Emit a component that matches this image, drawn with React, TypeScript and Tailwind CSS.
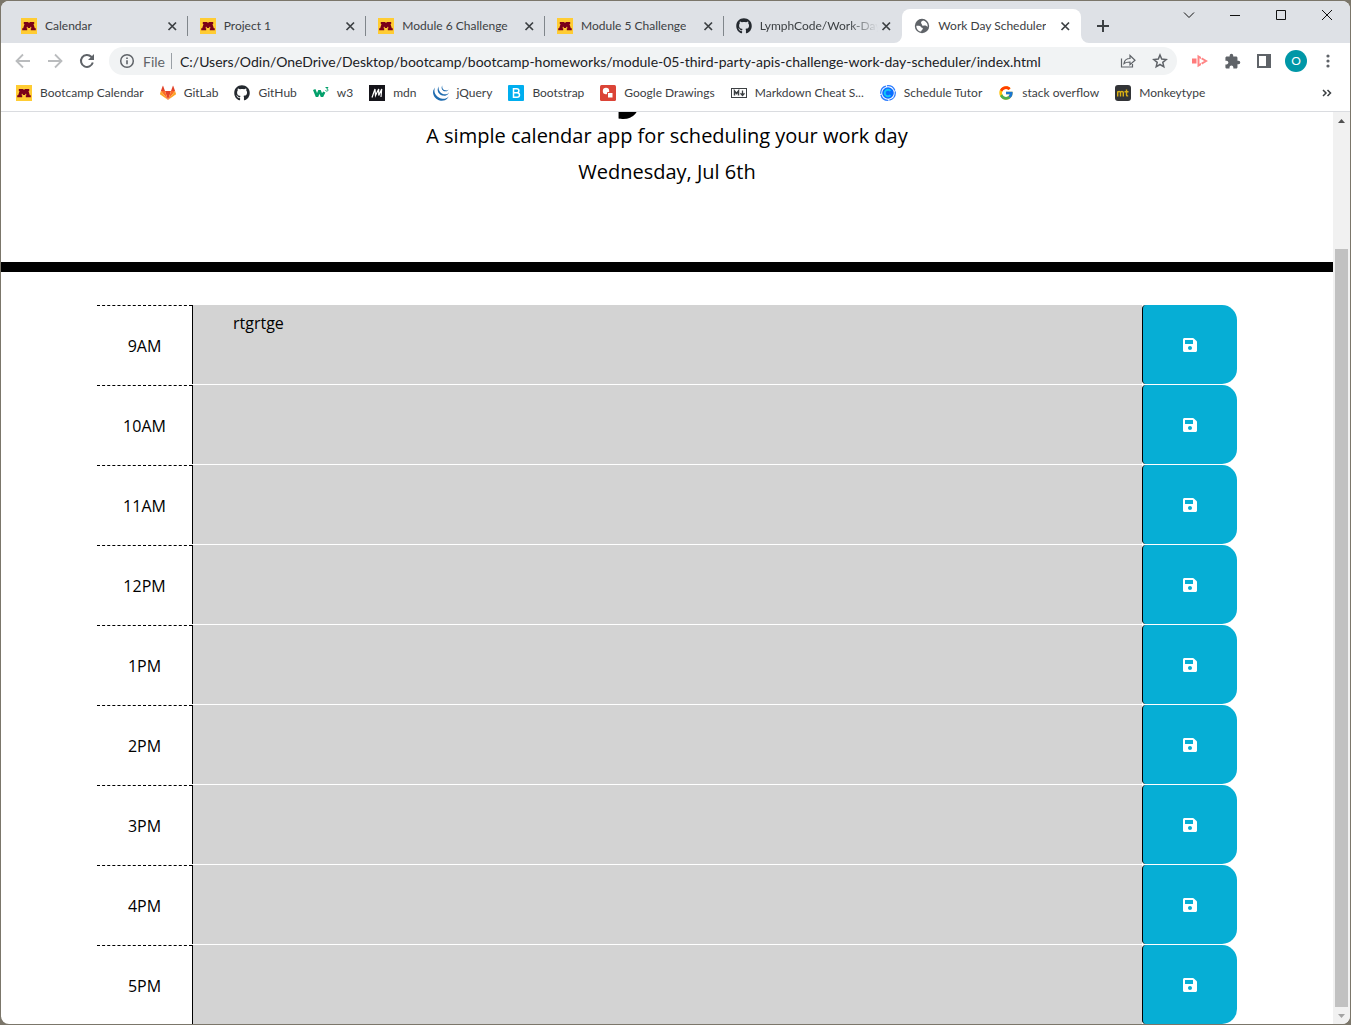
import type { ReactNode } from "react";
import { FaGithub, FaSave } from "react-icons/fa";
import { FcGoogle } from "react-icons/fc";
import { MdExtension } from "react-icons/md";
import { SiJquery } from "react-icons/si";

function MinnesotaIcon() {
  return (
    <svg viewBox="0 0 16 16" className="size-4 shrink-0" aria-hidden="true">
      <rect width="16" height="16" fill="#ffcc33" />
      <path
        d="M2.800 4h4.400L8 5.200 8.800 4h4.400v2h-.7l1.300 4.200h1v2H9.800v-2h.7L10 8.500 8.800 10H7.200L6 8.500l-.5 1.700h.7v2H1.200v-2h1L3.500 6h-.7z"
        fill="#7a0019"
      />
    </svg>
  );
}

function GitLabIcon() {
  return (
    <svg viewBox="0 0 16 16" className="size-4 shrink-0" aria-hidden="true">
      <path d="M8 15 5 6h6z" fill="#e24329" />
      <path d="M8 15 .9 6H5zM8 15l7.100-9H11z" fill="#fc6d26" />
      <path d="M.9 6 0 8.700c-.1.3 0 .6.3.8L8 15zM15.100 6l.9 2.700c.1.3 0 .6-.3.8L8 15z" fill="#fca326" />
      <path d="M.9 6 2.700 1c.1-.2.4-.2.5 0L5 6zM15.100 6 13.300 1c-.1-.2-.4-.2-.5 0L11 6z" fill="#e24329" />
    </svg>
  );
}

function W3Icon() {
  return (
    <svg viewBox="0 0 16 16" className="size-4 shrink-0" fill="none" stroke="#04a06b" aria-hidden="true">
      <path d="M1.200 4.500 4 11.500l2.500-6 2.500 6 2.200-4.500" strokeWidth="2.600" strokeLinejoin="bevel" />
      <path d="M12.500 2.500h2.500l-1.300 1.500c2 0 1.600 2.300-.1 2.100-.6 0-1-.3-1.200-.7" strokeWidth="1" />
    </svg>
  );
}

function MdnIcon() {
  return (
    <svg viewBox="0 0 16 16" className="size-4 shrink-0" aria-hidden="true">
      <rect width="16" height="16" fill="#15141a" />
      <path d="M3 12.500 6 4l.5 6.500L9.700 4v6.500L12.700 4l-.7 8" fill="none" stroke="#fff" strokeWidth="1.200" />
    </svg>
  );
}

function BootstrapIcon() {
  return (
    <svg viewBox="0 0 16 16" className="size-4 shrink-0" aria-hidden="true">
      <rect width="16" height="16" rx="1" fill="#00aeef" />
      <path
        d="M5.500 3.800h3.200c2.900 0 2.900 3.900 0 3.900H5.500h3.600c3.200 0 3.200 4.500 0 4.500H5.500z"
        fill="none"
        stroke="#fff"
        strokeWidth="1.500"
      />
    </svg>
  );
}

function DrawingsIcon() {
  return (
    <svg viewBox="0 0 16 16" className="size-4 shrink-0" aria-hidden="true">
      <rect width="16" height="16" rx="1.500" fill="#db4437" />
      <circle cx="6" cy="6" r="3.200" fill="#fff" />
      <path d="M7.500 7.500H13V13H7.500z" fill="#fff" stroke="#db4437" strokeWidth="1" />
    </svg>
  );
}

function MarkdownIcon() {
  return (
    <svg viewBox="0 0 16 16" className="size-4 shrink-0" fill="none" stroke="#3c4043" aria-hidden="true">
      <rect x=".5" y="3.500" width="15" height="9" />
      <path d="M3.500 10.500V6l2 2.500 2-2.500v4.500" strokeWidth="1.500" />
      <path d="M11.500 5.500V10M9.500 8.300l2 2.200 2-2.200" strokeWidth="1.300" />
    </svg>
  );
}

function CalendlyIcon() {
  return (
    <svg viewBox="0 0 16 16" className="size-4 shrink-0" fill="none" aria-hidden="true">
      <circle cx="8" cy="8" r="7.300" stroke="#2b7cff" strokeWidth="1.300" strokeDasharray="10 1" />
      <circle cx="8" cy="8" r="5.800" fill="#0a6cff" />
      <path d="M10.500 5.800a3.300 3.300 0 1 0 0 4.400" stroke="#12c5f5" strokeWidth="2" />
    </svg>
  );
}

function MonkeytypeIcon() {
  return (
    <svg viewBox="0 0 16 16" className="size-4 shrink-0" fill="none" stroke="#d9b014" strokeWidth="1.400" aria-hidden="true">
      <rect width="16" height="16" rx="3" fill="#323437" stroke="none" />
      <path d="M2.700 11.500V6.200M2.700 7.500c0-1.300 2.800-1.300 2.800 0v4M5.500 7.500c0-1.300 2.800-1.300 2.800 0v4M11.500 4.500v5.500c0 .8.500 1 1.700.9M9.500 6.700h4" />
    </svg>
  );
}

function GlobeIcon() {
  return (
    <svg viewBox="0 0 16 16" className="size-4 shrink-0" aria-hidden="true">
      <circle cx="8" cy="8" r="7.200" fill="#5f6368" />
      <path d="M9 2.500c-.8.8-2 .8-2 2.200 0 1 .9 1.200 1 2 .1.900 1 1.200 2 .9l1.500-.2c1 .1 1 1 2.200 1.300.2-3-1.700-5.600-4.700-6.200z" fill="#fff" />
      <path d="M2.300 7.700c1.200 0 2.500-.2 3.700.4 1 .5 1 1.500 2 1.700 1.200.3 1 1.500.2 2-.9.500-.7 1.300-1.200 1.800-2.700-.4-4.700-2.900-4.700-5.900z" fill="#fff" />
    </svg>
  );
}

function CloseIcon() {
  return (
    <svg viewBox="0 0 16 16" className="size-4" stroke="#3c4043" strokeWidth="1.700" aria-hidden="true">
      <path d="m4.500 4.500 7.500 7.500M12 4.500 4.500 12" />
    </svg>
  );
}

const tabs: { title: string; icon: ReactNode }[] = [
  { title: "Calendar", icon: <MinnesotaIcon /> },
  { title: "Project 1", icon: <MinnesotaIcon /> },
  { title: "Module 6 Challenge", icon: <MinnesotaIcon /> },
  { title: "Module 5 Challenge", icon: <MinnesotaIcon /> },
  { title: "LymphCode/Work-Day", icon: <FaGithub className="size-4 shrink-0 text-[#24292f]" /> },
];

const bookmarks: { title: string; icon: ReactNode }[] = [
  { title: "Bootcamp Calendar", icon: <MinnesotaIcon /> },
  { title: "GitLab", icon: <GitLabIcon /> },
  { title: "GitHub", icon: <FaGithub className="size-4 shrink-0 text-[#24292f]" /> },
  { title: "w3", icon: <W3Icon /> },
  { title: "mdn", icon: <MdnIcon /> },
  { title: "jQuery", icon: <SiJquery className="size-4 shrink-0 text-[#1f6cb0]" /> },
  { title: "Bootstrap", icon: <BootstrapIcon /> },
  { title: "Google Drawings", icon: <DrawingsIcon /> },
  { title: "Markdown Cheat S...", icon: <MarkdownIcon /> },
  { title: "Schedule Tutor", icon: <CalendlyIcon /> },
  { title: "stack overflow", icon: <FcGoogle className="size-4 shrink-0" /> },
  { title: "Monkeytype", icon: <MonkeytypeIcon /> },
];

const hours = ["9AM", "10AM", "11AM", "12PM", "1PM", "2PM", "3PM", "4PM", "5PM"];

function TabStrip() {
  return (
    <div className="flex h-[42px] shrink-0 items-start bg-[#dee1e6]">
      <div className="mt-2 ml-2 flex h-[34px] max-w-[1072px] min-w-0 flex-1">
        {tabs.map((tab, i) => (
          <div key={tab.title} className="flex min-w-0 flex-1 items-center">
            <button className="flex min-w-0 flex-1 items-center gap-2 pl-3 text-left">
              {tab.icon}
              <span
                className={
                  i === 4
                    ? "overflow-hidden whitespace-nowrap [mask-image:linear-gradient(to_right,black_75%,transparent)]"
                    : "overflow-hidden whitespace-nowrap"
                }
              >
                {tab.title}
              </span>
            </button>
            <button aria-label={`Close ${tab.title}`} className="mr-[7px] shrink-0">
              <CloseIcon />
            </button>
            <span className={i === 4 ? "w-px" : "h-5 w-px bg-[#80868b]"} />
          </div>
        ))}
        <div className="relative flex min-w-0 flex-1 items-center rounded-t-lg bg-white">
          <svg viewBox="0 0 8 8" className="absolute bottom-0 -left-2 size-2 fill-white" aria-hidden="true">
            <path d="M8 0v8H0a8 8 0 0 0 8-8" />
          </svg>
          <svg viewBox="0 0 8 8" className="absolute -right-2 bottom-0 size-2 fill-white" aria-hidden="true">
            <path d="M0 0v8h8a8 8 0 0 1-8-8" />
          </svg>
          <button className="flex min-w-0 flex-1 items-center gap-2 pl-3 text-left">
            <GlobeIcon />
            <span className="overflow-hidden whitespace-nowrap">Work Day Scheduler</span>
          </button>
          <button aria-label="Close Work Day Scheduler" className="mr-2 shrink-0">
            <CloseIcon />
          </button>
        </div>
      </div>
      <button aria-label="New tab" className="mt-[11px] ml-2 flex size-7 shrink-0 items-center justify-center">
        <svg viewBox="0 0 12 12" className="size-3" stroke="#3c4043" strokeWidth="2" aria-hidden="true">
          <path d="M6 0v12M0 6h12" />
        </svg>
      </button>
      <div className="ml-auto flex h-7 shrink-0">
        {[
          ["Search tabs", "M1 3.500l5 5 5-5"],
          ["Minimize", "M1 6.500h10"],
          ["Maximize", "M1.500 1.500h9v9h-9z"],
          ["Close window", "M1 1l10 10M11 1 1 11"],
        ].map(([label, d]) => (
          <button key={label} aria-label={label} className="flex w-[46px] items-center justify-center">
            <svg viewBox="0 0 12 12" className="size-3" fill="none" stroke="#111" aria-hidden="true">
              <path d={d} />
            </svg>
          </button>
        ))}
      </div>
    </div>
  );
}

function Toolbar() {
  return (
    <div className="flex h-9 shrink-0 items-center px-[6px]">
      <button aria-label="Back" className="flex w-8 justify-center">
        <svg viewBox="0 0 16 16" className="size-4" fill="none" stroke="#babcbe" strokeWidth="1.800" aria-hidden="true">
          <path d="M15 8H2M8 1.500 1.500 8 8 14.500" />
        </svg>
      </button>
      <button aria-label="Forward" className="flex w-8 justify-center">
        <svg viewBox="0 0 16 16" className="size-4" fill="none" stroke="#babcbe" strokeWidth="1.800" aria-hidden="true">
          <path d="M1 8h13M8 1.500 14.500 8 8 14.500" />
        </svg>
      </button>
      <button aria-label="Reload" className="flex w-8 justify-center">
        <svg viewBox="0 0 16 16" className="size-4" fill="none" stroke="#5f6368" strokeWidth="2" aria-hidden="true">
          <path d="M13.800 9.500A6 6 0 1 1 12.300 3.700L13.500 5" />
          <path d="M15 1v6H9z" fill="#5f6368" stroke="none" />
        </svg>
      </button>
      <div className="ml-[6px] flex h-7 min-w-0 flex-1 items-center rounded-full bg-[#f1f3f4] pl-[10px] text-[14px]">
        <svg viewBox="0 0 16 16" className="size-4 shrink-0" fill="none" stroke="#5f6368" strokeWidth="1.500" aria-hidden="true">
          <circle cx="8" cy="8" r="6.300" />
          <path d="M8 7.300v4M8 4.500V6" strokeWidth="1.600" />
        </svg>
        <label htmlFor="address" className="ml-2 text-[#5f6368]">
          File
        </label>
        <span className="ml-[6px] h-4 w-px shrink-0 bg-[#9aa0a6]" />
        <input
          id="address"
          className="ml-2 min-w-0 flex-1 bg-transparent text-[#202124] outline-none"
          defaultValue="C:/Users/Odin/OneDrive/Desktop/bootcamp/bootcamp-homeworks/module-05-third-party-apis-challenge-work-day-scheduler/index.html"
        />
        <button aria-label="Share" className="flex w-8 shrink-0 justify-center">
          <svg viewBox="0 0 16 16" className="size-4" fill="none" stroke="#5f6368" strokeWidth="1.200" aria-hidden="true">
            <path d="M1.500 5.500v8.500h11v-3" />
            <path d="M4 10.500c.5-3.500 2.500-5 6-5v-3l5 4.700-5 4.500V9c-2.800 0-4.500.3-6 1.500z" />
          </svg>
        </button>
        <button aria-label="Bookmark this page" className="mr-px flex w-8 shrink-0 justify-center">
          <svg viewBox="0 0 16 16" className="size-4" fill="none" stroke="#5f6368" strokeWidth="1.500" aria-hidden="true">
            <path d="m8 2 1.700 4.100 4.500.4-3.400 2.900 1 4.400L8 11.500l-3.800 2.300 1-4.400L1.800 6.500l4.500-.4z" />
          </svg>
        </button>
      </div>
      <button aria-label="Recorder" className="ml-[7px] flex w-8 justify-center">
        <svg viewBox="0 0 16 14" className="h-[14px] w-4" aria-hidden="true">
          <path d="M0 4.500h4.500v5H0z" fill="#ff7b7b" />
          <path d="M6.500 2.500 14 7l-7.500 4.500z" fill="none" stroke="#ff8585" strokeWidth="2" />
          <path d="M9.500 2v2.500M9.500 9.500V12" stroke="#fff" />
        </svg>
      </button>
      <button aria-label="Extensions" className="flex w-8 justify-center text-[#5f6368]">
        <MdExtension className="size-[17px]" />
      </button>
      <button aria-label="Side panel" className="flex w-8 justify-center">
        <svg viewBox="0 0 14 14" className="size-[14px]" aria-hidden="true">
          <path d="M1 1h12v12H1z" fill="none" stroke="#5f6368" strokeWidth="2" />
          <path d="M9 0h5v14H9z" fill="#5f6368" />
        </svg>
      </button>
      <button aria-label="Profile" className="flex w-8 justify-center">
        <span className="flex size-[22px] items-center justify-center rounded-full bg-[#0097a7] text-[12px] leading-none text-white">
          O
        </span>
      </button>
      <button aria-label="Menu" className="flex w-8 justify-center">
        <svg viewBox="0 0 4 14" className="h-[14px] w-1" fill="#5f6368" aria-hidden="true">
          <circle cx="2" cy="2" r="1.600" />
          <circle cx="2" cy="7" r="1.600" />
          <circle cx="2" cy="12" r="1.600" />
        </svg>
      </button>
    </div>
  );
}

function BookmarksBar() {
  return (
    <nav className="flex h-[33px] shrink-0 items-center gap-4 border-b border-[#dadce0] pr-[18px] pb-1 pl-[15px]">
      {bookmarks.map((b) => (
        <a key={b.title} href="#" className="flex items-center gap-2 whitespace-nowrap">
          {b.icon}
          {b.title}
        </a>
      ))}
      <button aria-label="More bookmarks" className="ml-auto">
        <svg viewBox="0 0 10 8" className="h-2 w-[10px]" fill="none" stroke="#3c4043" strokeWidth="1.500" aria-hidden="true">
          <path d="m1 1 3 3-3 3M5.500 1l3 3-3 3" />
        </svg>
      </button>
    </nav>
  );
}

function Scheduler() {
  return (
    <main className="min-w-0 flex-1 overflow-hidden font-['Open_Sans',sans-serif] text-[16px] text-black">
      <header className="flex h-[160px] flex-col items-center justify-end border-b-[10px] border-black pb-[75px] text-center text-[20px] leading-[30px]">
        <h1 className="mb-1 shrink-0 text-[67px] leading-[80px] font-bold">Work Day Scheduler</h1>
        <p className="mb-[6px] shrink-0">A simple calendar app for scheduling your work day</p>
        <p className="shrink-0">Wednesday, Jul 6th</p>
      </header>
      <div className="mx-auto mt-[33px] max-w-[1140px]">
        {hours.map((hour, i) => (
          <div key={hour} className="flex h-20">
            <label
              htmlFor={`hour-${hour}`}
              className="flex w-1/12 items-center justify-center border-t border-dashed border-black"
            >
              {hour}
            </label>
            <textarea
              id={`hour-${hour}`}
              defaultValue={i === 0 ? "rtgrtge" : ""}
              className="mb-px min-w-0 flex-1 resize-none border-l border-black bg-[#d3d3d3] px-10 py-[6px] leading-6 outline-none"
            />
            <button
              aria-label={`Save ${hour}`}
              className="mb-px flex w-1/12 items-center justify-center rounded-l-[4px] rounded-r-[15px] border-l border-black bg-[#06aed5] text-white"
            >
              <FaSave className="size-4" />
            </button>
          </div>
        ))}
      </div>
    </main>
  );
}

function Scrollbar() {
  return (
    <div className="flex w-[17px] shrink-0 flex-col items-center bg-[#f1f1f1]">
      <button aria-label="Scroll up" className="flex h-[17px] w-full items-center justify-center">
        <svg viewBox="0 0 7 4" className="h-1 w-[7px]" fill="#505050" aria-hidden="true">
          <path d="M0 4 3.500 0 7 4z" />
        </svg>
      </button>
      <div className="mt-[120px] w-[13px] flex-1 bg-[#c1c1c1]" />
      <button aria-label="Scroll down" className="flex h-[17px] w-full items-center justify-center">
        <svg viewBox="0 0 7 4" className="h-1 w-[7px]" fill="#a3a3a3" aria-hidden="true">
          <path d="M0 0h7L3.500 4z" />
        </svg>
      </button>
    </div>
  );
}

export default function App() {
  return (
    <div className="h-screen bg-[#7b766a] p-px font-[Lato,sans-serif] text-[12px] text-[#3c4043]">
      <div className="flex h-full flex-col overflow-hidden rounded-lg bg-white">
        <TabStrip />
        <Toolbar />
        <BookmarksBar />
        <div className="flex min-h-0 flex-1">
          <Scheduler />
          <Scrollbar />
        </div>
      </div>
    </div>
  );
}
